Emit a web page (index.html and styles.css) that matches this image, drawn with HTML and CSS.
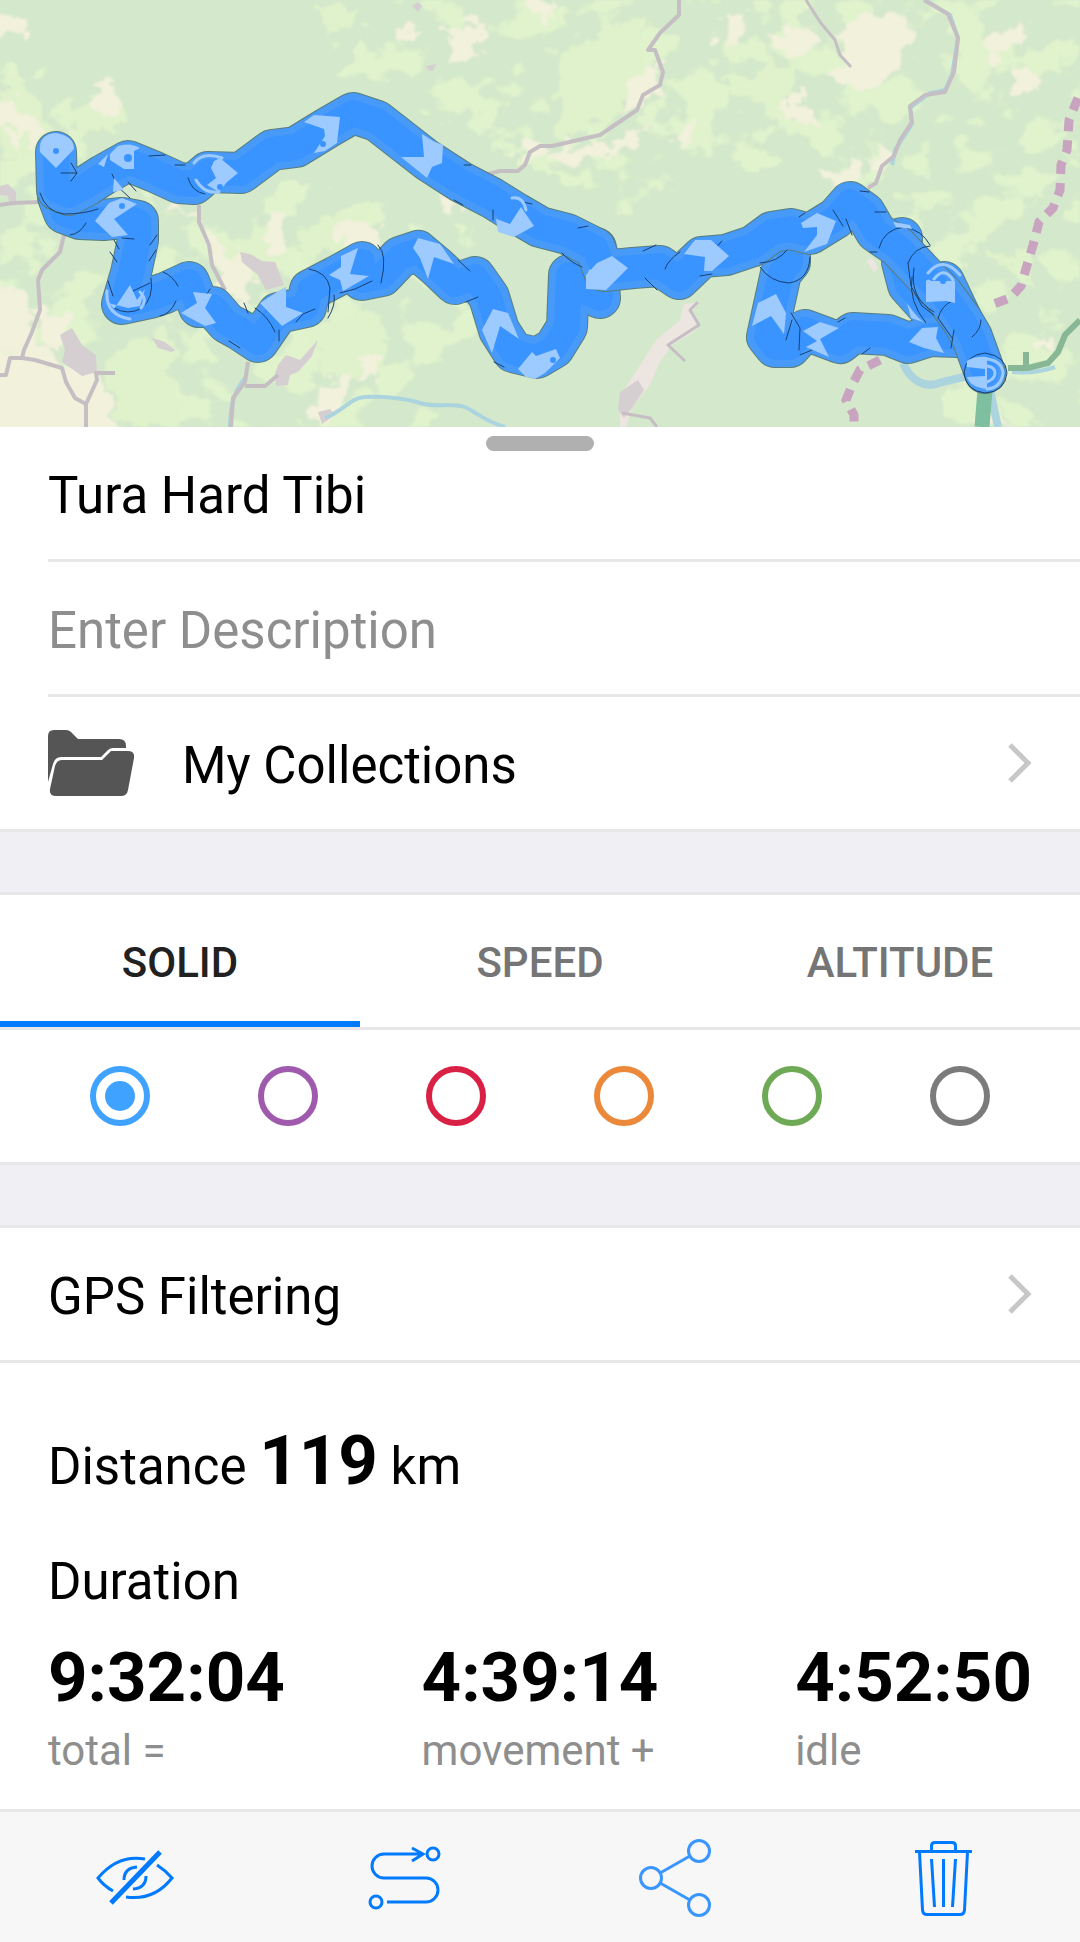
FILE: index.html
```html
<!DOCTYPE html>
<html lang="en">
<head>
<meta charset="utf-8">
<meta name="viewport" content="width=device-width, initial-scale=1">
<title>Tura Hard Tibi</title>
<link rel="stylesheet" href="styles.css">
</head>
<body>
<div class="page">
  <svg class="map" viewBox="0 0 1080 427" preserveAspectRatio="xMidYMid slice" role="img" aria-label="Map of the track">
    <defs>
      <filter id="rough" x="-10%" y="-10%" width="120%" height="120%">
        <feTurbulence type="fractalNoise" baseFrequency="0.05" numOctaves="3" seed="4" result="n"/>
        <feDisplacementMap in="SourceGraphic" in2="n" scale="34" xChannelSelector="R" yChannelSelector="G"/>
        <feGaussianBlur stdDeviation="1"/>
      </filter>
      <filter id="meadow" x="0" y="0" width="100%" height="100%" color-interpolation-filters="sRGB">
        <feTurbulence type="fractalNoise" baseFrequency="0.022 0.026" numOctaves="4" seed="11"/>
        <feColorMatrix values="0 0 0 0 0.878  0 0 0 0 0.953  0 0 0 0 0.804  12 0 0 0 -6.1"/>
        <feGaussianBlur stdDeviation="1"/>
      </filter>
      <path id="loop" d="M56 152L57 190L69 195L86 186L103 175L128 161L155 172L179 183L194 184L208 172L241 173L272 150L296 147L327 128L353 113L377 121L427 160L461 182L492 198L516 213L540 227L567 234L595 248L604 271L633 268L660 266L679 279L702 257L726 255L753 246L772 232L791 229L810 234L836 218L850 202L865 213L876 232L898 247L915 265L929 280L943 294L962 320L972 337L985 373"/>
      <path id="back" d="M902 238L902 262L908 285L926 305L944 282L962 320L957 337L930 336L908 343L888 335L853 333L840 343L805 330L790 347L775 347L767 337L774 305L781 273L790 262L790 232"/>
      <path id="south" d="M596 248L600 298L582 290L569 275L567 327L554 348L537 358L513 352L499 330L489 297L475 277L455 284L437 267L418 251L400 257L382 276L362 280L362 262L337 276L310 290L306 307L278 313L258 342L240 330L227 323L213 307L199 307L189 282L165 293L150 298L122 304L131 273L138 240L138 221L122 218L103 220L80 219L64 213L58 197"/>
    </defs>
    <rect width="1080" height="427" fill="#d4e8cb"/>
    <mask id="meadow-area"><g fill="#fff" filter="url(#rough)"><path d="M390-30H1110V240L960 300L820 150L620 210L440 120L340 80Z"/><path d="M-20 60L60 80L110 160L330 190L470 230L500 320L420 440H-20Z"/><path d="M1000 230L1100 230V440H940L950 340Z"/></g></mask>
    <rect width="1080" height="427" filter="url(#meadow)" mask="url(#meadow-area)"/>
    <g class="meadow" filter="url(#rough)">
      <path d="M320 10L360 0L345 30L330 40Z"/><path d="M560 60L650 10L640 90L560 150Z"/><path d="M70 110L120 85L120 130L80 135Z"/>
      <path d="M310 330L380 310L390 370L325 380Z"/><path d="M200 250L260 230L300 250L240 290Z"/><path d="M720 80L800 60L780 120Z"/>
      <path d="M0 75L35 95L60 150L0 160Z"/><path d="M300 225L370 205L380 240L300 260Z"/><path d="M990 255L1040 245L1030 290Z"/>
      <path d="M110 345L170 330L180 427L120 430Z"/>
    </g>
    <g class="field" filter="url(#rough)">
      <path d="M-10 355L40 345L62 370L88 360L110 385L120 440H-10Z"/><path d="M-10 105L15 98L34 120L38 150L-10 120Z"/><path d="M90 85L115 80L122 108L102 120Z"/>
      <path d="M165 205L198 210L210 270L240 300L262 285L235 250L210 235L180 200Z"/><path d="M262 215L290 205L285 245L268 250Z"/><path d="M335 222L380 225L375 262L340 255Z"/>
      <path d="M-10 275L35 300L30 350L-10 350Z"/><path d="M40 310L70 320L60 350L42 345Z"/><path d="M325 385L350 375L348 405L320 427L310 410Z"/><path d="M355 360L382 350L378 385L358 380Z"/>
      <path d="M395 28L420 30L412 45L396 40Z"/><path d="M445 25L485 20L480 55L455 65Z"/><path d="M530 0L550 0L548 20L530 18Z"/><path d="M-10 10L30 20L28 35L-10 38Z"/>
      <path d="M720 15L750 12L735 45L718 38Z"/><path d="M768 35L810 25L825 45L790 55Z"/><path d="M838 35L860 12L908 20L900 75L865 92L828 75L845 60Z"/><path d="M780 100L808 95L815 125L782 120Z"/>
      <path d="M638 70L660 60L655 85L640 105L622 110Z"/><path d="M980 45L1020 20L1035 30L1000 62Z"/><path d="M1010 75L1035 65L1045 92L1020 90Z"/><path d="M680 125L700 120L695 140L675 140Z"/>
      <path d="M825 175L860 160L865 172L835 195Z"/><path d="M870 140L890 150L895 165L878 170Z"/><path d="M1033 340L1050 342L1045 355L1033 350Z"/><path d="M455 190L470 205L450 210L440 200Z"/>
      <path d="M545 150L600 142L660 130L580 165L545 160Z"/><path d="M520 140L545 145L520 160Z"/><path d="M975 415L1000 405L1010 427H980Z"/>
    </g>
    <g class="town">
      <path d="M60 335L72 328L82 345L96 355L97 372L82 376L62 362L65 350Z"/><path d="M240 252L250 254L262 261L275 262L284 285L266 290L258 275L242 262Z"/><path d="M278 365L286 355L300 360L318 340L312 356L298 372L290 375L288 385L276 386L275 374Z"/>
      <path d="M152 338L165 342L175 350L172 352L158 348Z"/><path d="M0 186L8 184L16 192V205L10 206L8 196L0 195Z"/><path d="M412 6L418 2L422 6L418 12Z"/><path d="M426 66L436 64L433 71L428 70Z"/><path d="M318 412L330 409L335 415L322 424Z"/>
      <path class="sand" d="M684 304L700 302L692 312L700 325L694 332L672 345L660 362L650 385L632 408L626 427H620L620 396L640 365L656 340L680 320Z"/><path d="M620 392L638 380L644 390L632 408L624 418L618 410Z"/><path class="sand" d="M866 260L872 258L878 268L874 273Z"/>
    </g>
    <g class="water">
      <path d="M325 418C345 410 350 398 365 397S405 398 420 403S455 402 467 408S482 420 505 427"/>
      <path d="M245 378Q230 395 230 427M925 0L950 15L958 38L952 75L945 90L930 93L910 108L912 124L895 150L892 165"/>
      <path d="M903 363C910 380 925 390 942 382L985 372" class="wide"/><path d="M1012 372Q1035 374 1055 367"/><path d="M990 390L998 427" class="wide"/>
    </g>
    <g class="road">
      <path d="M0 205L12 203L40 202M64 235L60 252L42 270L38 280L40 310L32 332L24 350L22 358L10 358L6 375H0M22 358L35 360L62 368L66 382L75 398L86 404L97 380L96 373H115M86 404V427"/>
      <path d="M199 205V222L209 245L212 265L225 290M248 362L245 382L233 398L231 427M245 386H265L278 375"/>
      <path d="M488 174L500 171H518L525 165L530 152L540 146H552L600 135L637 110L643 95L660 85L663 72L655 50H648L660 33L679 15V0"/>
      <path d="M924 0L948 14L958 38L954 72L945 92L925 95L910 106L912 122L900 140L894 156L882 166L876 183L868 188"/>
      <path d="M806 0L820 22L835 40L840 55L851 67" class="thin"/><path d="M698 302L690 310L699 325L668 345L685 361M622 413L650 418L657 427" class="thin"/>
    </g>
    <path class="river" d="M1080 320L1065 335L1058 352L1048 363L1028 368H1008M1026 368V352"/><path class="river delta" d="M985 390L982 427"/>
    <path class="frontier" d="M1078 98L1069 120L1067 150L1061 165L1060 190L1053 208L1039 222L1033 245L1028 262L1021 286L1010 298L988 306M880 360L860 370L852 385L846 400L854 415V427"/>
    <g class="track">
      <g class="track-edge"><use href="#south"/></g><g class="track-body"><use href="#south"/></g><g class="track-core"><use href="#south"/></g>
      <g class="track-edge"><use href="#back"/></g><g class="track-body"><use href="#back"/></g><g class="track-core"><use href="#back"/></g>
      <g class="track-edge"><use href="#loop"/></g><g class="track-body"><use href="#loop"/></g><g class="track-core"><use href="#loop"/></g>
      <g class="seam">
        <path d="M61 173H77L71 181M77 173L71 163M112 174L118 187L130 198M128 182L136 191M149 156L165 155M175 165H185M188 178Q192 192 205 194M40 193Q46 212 64 214Q84 214 98 209"/>
        <path d="M86 223Q80 234 70 235M122 238L134 239M114 240L119 249M110 252L117 262M157 235L150 245M156 250L149 261M108 281L113 296M114 308Q128 316 142 308Q154 298 151 278M133 291L150 283M163 272Q173 276 178 286M176 301Q170 315 160 316M210 289L204 299M244 303L248 313M255 308Q268 316 275 332M279 330V341M229 341L240 348"/>
        <path d="M309 269Q327 272 330 288L328 312M334 295Q336 305 328 318M340 293L355 289L372 281M378 245Q388 254 381 283M458 260L470 271M466 302L478 297M296 322L303 314L315 309M464 165L471 165M454 200L463 205M493 210V220M523 202L532 204M504 367L494 362"/>
        <path d="M562 253Q570 262 582 267M578 228L588 226M643 251L656 245M645 278L657 290M665 269Q668 260 680 252M714 250L722 241M700 276L712 274M760 263Q778 262 787 250M799 217L805 213M833 210L843 226M846 219L852 235M860 191L869 192M875 212H886M760 267Q770 282 789 283Q809 280 810 257M791 313L800 328L799 350M786 340L792 320M800 355L812 350M838 322L845 318M862 354L870 348"/>
        <path d="M879 248Q884 229 904 227Q922 230 930 245M877 252H870M908 263Q914 247 930 246M908 263L911 286L922 306L934 315M914 268Q909 298 934 312M912 277Q908 301 926 323M938 318Q942 305 952 301M938 318L952 338M951 348L954 330M981 320Q981 330 972 337M964 373Q965 355 985 353Q1006 356 1007 373Q1005 392 985 393Q966 391 964 373"/>
      </g>
      <g class="arrow">
        <path d="M40 152Q38 134 56 133Q74 136 74 149L56 168Q46 158 40 152Z"/><path d="M110 154L118 146Q130 142 140 148L134 151V169H124L110 160Z"/><path d="M98 164L108 154L104 167ZM114 178L124 190L113 192Z"/>
        <path d="M214 161L220 158L238 173L227 182L219 192L207 185L216 178L211 168Z"/><path d="M304 122L314 115L340 117L337 143L325 151L314 153L325 136L324 129Z"/><path d="M422 134L433 141L443 145L442 163L432 167L427 178L401 157H424Z"/>
        <path d="M496 219L510 224L521 207L534 226L514 237L498 232Z"/><path d="M95 221L109 203L122 198L137 204L114 219L128 235L112 237Z"/><path d="M106 299L114 309L130 285L137 300L145 289L140 306L128 308L108 303Z"/>
        <path d="M181 313L197 303L193 292L212 294L205 308L216 323L205 326Z"/><path d="M260 303L280 290L286 287V307L303 313L282 326Z"/><path d="M329 275L341 267V256L358 248L350 274L369 276L343 291L340 280Z"/>
        <path d="M413 248L418 238L440 244L454 264L434 257L428 279L420 258Z"/><path d="M482 330L493 309L508 313L519 339L500 326L492 353Z"/><path d="M518 369L532 352L536 356L556 349L560 358L545 373L535 379L526 377Z"/>
        <path d="M586 275L597 263L612 256L628 268L606 290L586 289Z"/><path d="M684 254L695 240L711 240L729 256L712 271H704L705 257Z"/><path d="M801 223L817 213L836 221L827 244L804 252L817 235V227L803 228Z"/>
        <path d="M752 326L758 303L776 294L786 313L784 334L771 316Z"/><path d="M803 331L820 322L839 328L820 339L829 357L806 347L817 341Z"/><path d="M909 342L922 328L938 327L936 338L944 353L924 348Z"/>
        <path d="M926 281Q928 278 931 281H955V303L946 301L926 302Z"/><path d="M967 361Q974 356 987 357V389Q970 387 967 377L985 376V369L967 367Z"/><path d="M893 222L910 225L912 229L896 227Z"/><path d="M907 303Q920 323 929 324L911 318Z"/>
      </g>
      <g class="ring"><path d="M194 163Q203 151 222 158M196 180Q204 194 219 192M928 273Q943 255 960 275M934 279Q944 266 953 280M987 359Q1002 361 1003 373Q1001 388 987 389M987 366Q995 367 995 373T987 382M107 291Q105 315 130 319M140 292Q148 300 141 308M590 271Q587 285 597 288M512 198Q523 196 526 210"/></g>
      <g class="dot"><circle cx="56" cy="151" r="3"/><circle cx="128" cy="158" r="4"/><circle cx="323" cy="144" r="3"/><circle cx="122" cy="206" r="3"/><circle cx="943" cy="281" r="3"/><circle cx="553" cy="360" r="3"/><circle cx="220" cy="187" r="3"/></g>
    </g>
  </svg>

  <main class="sheet">
    <div class="handle"></div>
    <section>
      <div class="row inset"><input class="field-input" type="text" aria-label="Name" value="Tura Hard Tibi"></div>
      <div class="row inset"><input class="field-input" type="text" aria-label="Description" placeholder="Enter Description"></div>
      <a class="row link" href="#collections">
        <svg class="folder" viewBox="0 0 86 66" aria-hidden="true"><path d="M6 0H18Q21 0 23 2L30 9H71Q78 9 78 16V18H65Q62 18 60 20L53 27H13Q7 27 5 34L0 52V6Q0 0 6 0Z"/><path d="M14 30H54L63 21H80Q87 21 86 28L80 60Q79 66 73 66H8Q1 66 2 59L7 36Q9 30 14 30Z"/></svg>
        <span>My Collections</span>
        <svg class="chevron" viewBox="0 0 24 40" aria-hidden="true"><path d="M2 2L20 20L2 38"/></svg>
      </a>
    </section>
    <div class="spacer"></div>
    <section>
      <div class="tabs" role="tablist">
        <button class="tab active" type="button" role="tab" aria-selected="true">SOLID</button>
        <button class="tab" type="button" role="tab" aria-selected="false">SPEED</button>
        <button class="tab" type="button" role="tab" aria-selected="false">ALTITUDE</button>
      </div>
      <div class="colors" role="radiogroup" aria-label="Track color">
        <input class="color blue" type="radio" name="color" aria-label="Blue" checked>
        <input class="color purple" type="radio" name="color" aria-label="Purple">
        <input class="color red" type="radio" name="color" aria-label="Red">
        <input class="color orange" type="radio" name="color" aria-label="Orange">
        <input class="color green" type="radio" name="color" aria-label="Green">
        <input class="color gray" type="radio" name="color" aria-label="Gray">
      </div>
    </section>
    <div class="spacer"></div>
    <a class="row link" href="#filtering">
      <span>GPS Filtering</span>
      <svg class="chevron" viewBox="0 0 24 40" aria-hidden="true"><path d="M2 2L20 20L2 38"/></svg>
    </a>
    <section class="stats">
      <p class="distance">Distance <b>119</b> km</p>
      <h2 class="heading">Duration</h2>
      <dl class="times">
        <div class="time"><dt>total =</dt><dd>9:32:04</dd></div>
        <div class="time"><dt>movement +</dt><dd>4:39:14</dd></div>
        <div class="time"><dt>idle</dt><dd>4:52:50</dd></div>
      </dl>
    </section>
  </main>

  <footer class="toolbar">
    <button class="tool" type="button" aria-label="Hide track"><svg viewBox="0 0 78 78"><path d="M49 20Q22 15 2 39Q8 47 17 52M61 26Q69 31 76 39Q58 62 30 58M28 41Q28 29 41 28M50 37Q50 49 37 50"/><path class="slash" d="M64 13L15 64"/></svg></button>
    <button class="tool" type="button" aria-label="Edit route"><svg viewBox="0 0 78 78"><path d="M56 15H18A12 12 0 0 0 18 39H60A12 12 0 0 1 60 63H21M46 9L57 15L46 22"/><circle cx="67" cy="15" r="6"/><circle cx="10" cy="63" r="6"/></svg></button>
    <button class="tool light" type="button" aria-label="Share"><svg viewBox="0 0 78 78"><circle cx="63" cy="12" r="10.5"/><circle cx="15" cy="39" r="10.5"/><circle cx="63" cy="66" r="10.5"/><path d="M25 33.500L53 17.500M25 44.500L53 60.500"/></svg></button>
    <button class="tool" type="button" aria-label="Delete"><svg viewBox="0 0 78 78"><path d="M9 12.500H66M25.500 12V7Q25.500 3.500 29 3.500H46Q49.500 3.500 49.500 7V12M13.500 13L16.500 71Q17 75.500 21 75.500H54Q58 75.500 58.500 71L61.500 13M25.500 20L28.500 68M37.500 20V68M49.500 20L46.500 68"/></svg></button>
  </footer>
</div>
</body>
</html>
```
FILE: styles.css
```css
* { box-sizing: border-box; }

body {
  margin: 0;
  background: #fff;
  color: #000;
  font-family: Roboto, "Liberation Sans", sans-serif;
  font-size: 51px;
  line-height: 60px;
}

.page {
  display: flex;
  flex-direction: column;
  min-height: 100vh;
}

/* Map */
.map { display: block; width: 100%; aspect-ratio: 1080 / 427; }
.meadow { fill: #dff2cb; }
.field { fill: #f2f1dc; }
.town { fill: #d5cfd1; }
.town .sand { fill: #ece5e0; }
.water { fill: none; stroke: #acd4de; stroke-width: 4; }
.water .wide { stroke-width: 8; }
.road { fill: none; stroke: #c5bfc4; stroke-width: 4; stroke-linejoin: round; }
.road .thin { stroke-width: 3; }
.river { fill: none; stroke: #87b794; stroke-width: 6; }
.river.delta { stroke: #7dbf9e; stroke-width: 15; }
.frontier { fill: none; stroke: #c9a4c0; stroke-width: 9; stroke-dasharray: 13 9; }
.track { fill: none; stroke-linecap: round; stroke-linejoin: round; }
.track-edge { stroke: #587d7d; stroke-width: 42; }
.track-body { stroke: #489af8; stroke-width: 40; }
.track-core { stroke: #3a94ff; stroke-width: 26; }
.seam { stroke: #17406f; stroke-width: 1; }
.arrow { fill: #9dcaff; }
.ring { stroke: #9dcaff; stroke-width: 3; }
.dot { fill: #3a94ff; }

/* Sheet */
.sheet { position: relative; flex: 1; }

.handle {
  position: absolute;
  top: 9px;
  left: 50%;
  width: 108px;
  height: 15px;
  margin-left: -54px;
  border-radius: 8px;
  background: #b0b0b0;
}

.row {
  display: flex;
  align-items: center;
  height: 135px;
  border-bottom: 3px solid #e7e7e9;
}
.row.inset { margin-left: 48px; }
.row.link {
  gap: 48px;
  padding: 0 48px;
  color: inherit;
  text-decoration: none;
}
.row span { padding-top: 6px; }

.field-input {
  width: 100%;
  height: 100%;
  padding: 4px 48px 0 0;
  border: 0;
  outline: 0;
  background: none;
  color: inherit;
  font: inherit;
}
.field-input::placeholder { color: #8e8e8e; opacity: 1; }

.folder { width: 86px; height: 66px; fill: #555; }
.chevron {
  width: 24px;
  height: 40px;
  margin-left: auto;
  fill: none;
  stroke: #c7c7c7;
  stroke-width: 5;
}

.spacer {
  height: 63px;
  background: #efeff4;
  border-bottom: 3px solid #e7e7e9;
}

.tabs {
  display: grid;
  grid-template-columns: repeat(3, 1fr);
  height: 135px;
  border-bottom: 3px solid #e7e7e9;
}
.tab {
  padding: 10px 0 0;
  border: 0;
  border-bottom: 6px solid transparent;
  background: none;
  color: #757575;
  font: 500 42px/50px Roboto, "Liberation Sans", sans-serif;
}
.tab.active { border-color: #007aff; color: #212121; }

.colors {
  display: flex;
  align-items: center;
  justify-content: space-around;
  height: 135px;
  padding: 0 36px;
  border-bottom: 3px solid #e7e7e9;
}
.color {
  appearance: none;
  width: 60px;
  height: 60px;
  margin: 0;
  border: 6px solid currentColor;
  border-radius: 50%;
  background: #fff;
}
.color:checked { padding: 9px; }
.color:checked::before {
  content: "";
  display: block;
  height: 30px;
  border-radius: 50%;
  background: currentColor;
}
.blue { color: #40a2ff; }
.purple { color: #9f5aae; }
.red { color: #d92045; }
.orange { color: #ec883a; }
.green { color: #6ea956; }
.gray { color: #7b7b7b; }

/* Statistics */
.stats { padding: 58px 48px 32px; }
.distance { margin: 0; line-height: 80px; }
.distance b { font-size: 69px; }
.heading { margin: 45px 0 26px; font: inherit; }
.times { display: flex; justify-content: space-between; margin: 0; }
.time { display: flex; flex-direction: column-reverse; gap: 8px; }
.time dd { margin: 0; font-size: 69px; font-weight: 700; line-height: 80px; }
.time dt { color: #8e8e8e; font-size: 42px; line-height: 50px; }

/* Toolbar */
.toolbar {
  display: grid;
  grid-template-columns: repeat(4, 1fr);
  height: 133px;
  border-top: 3px solid #e7e7e7;
  background: #f7f7f7;
}
.tool {
  display: flex;
  align-items: center;
  justify-content: center;
  padding: 2px 0 0;
  border: 0;
  background: none;
  color: #007aff;
}
.tool.light { color: #3a96ff; }
.tool svg {
  width: 78px;
  height: 78px;
  fill: none;
  stroke: currentColor;
  stroke-width: 3;
}
.tool .slash { stroke-width: 5; }
```
